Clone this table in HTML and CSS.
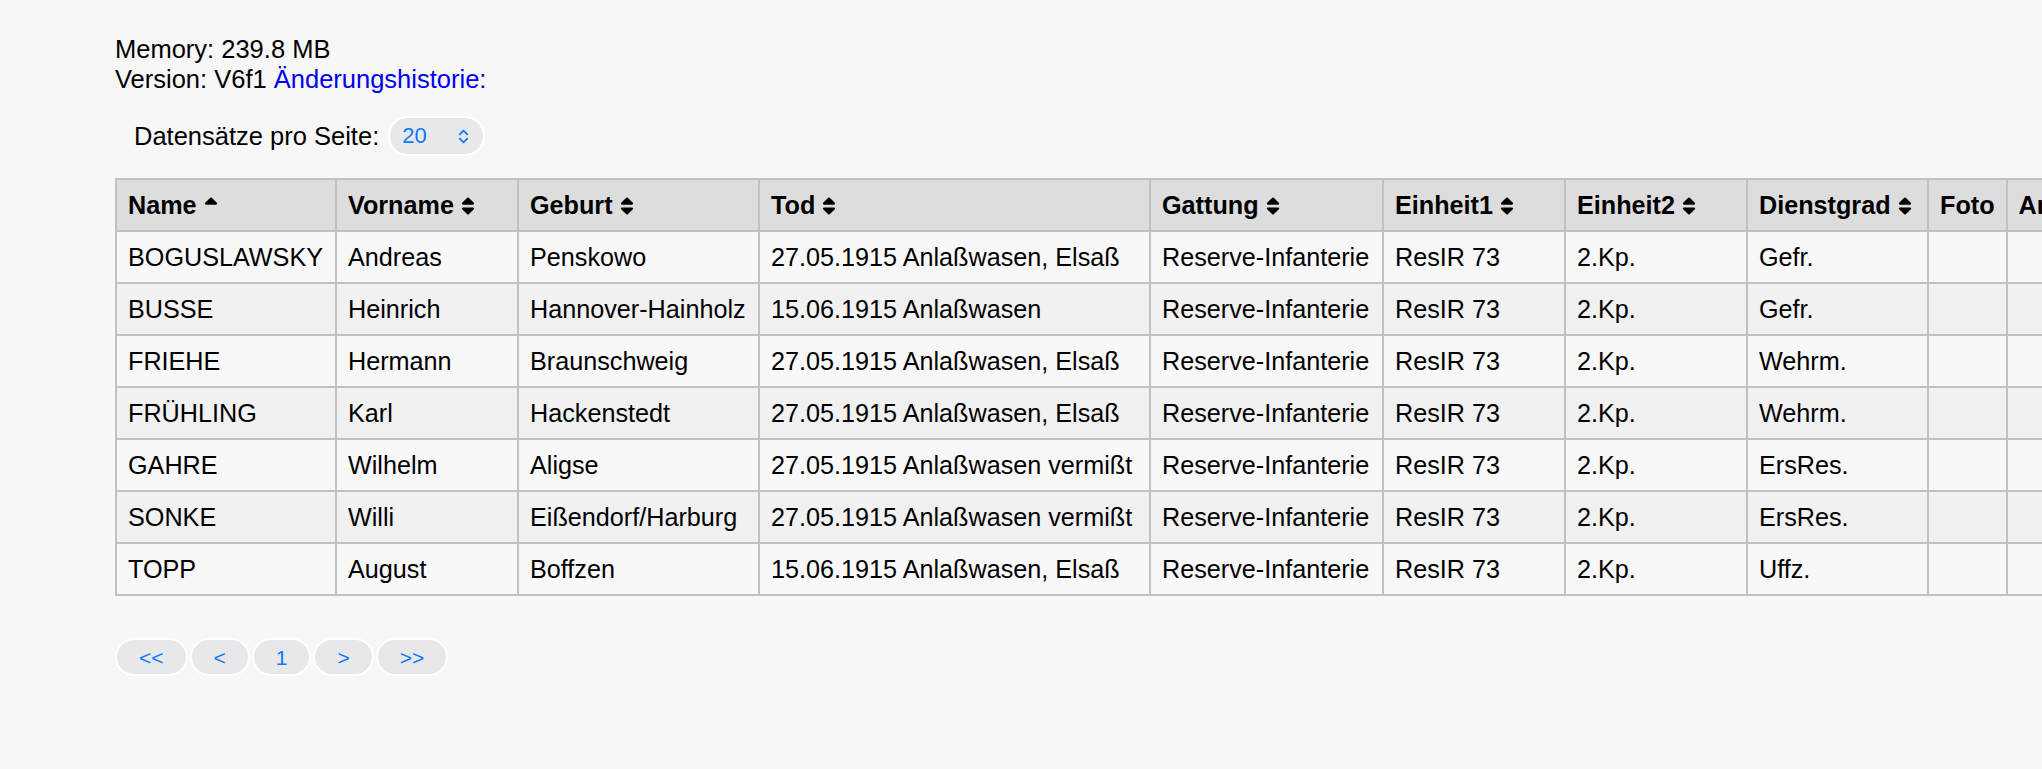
FILE: index.html
```html
<!DOCTYPE html>
<html lang="de">
<head>
<meta charset="utf-8">
<title>Datensätze</title>
<link rel="stylesheet" href="styles.css">
</head>
<body>
<div class="page">
  <div class="info">
    <div>Memory: 239.8 MB</div>
    <div>Version: V6f1 <a class="history" href="#">Änderungshistorie:</a></div>
  </div>

  <div class="pagesize">
    <span class="pagesize-label">Datensätze pro Seite:</span>
    <span class="select">
      <span class="select-value">20</span>
      <svg class="chevrons" viewBox="0 0 12 16" width="13" height="17"><path d="M2.5 6 L6 2.5 L9.5 6 M2.5 10 L6 13.5 L9.5 10" fill="none" stroke="#0a7aff" stroke-width="1.7" stroke-linecap="round" stroke-linejoin="round"/></svg>
    </span>
  </div>

  <table class="grid">
    <thead>
      <tr>
        <th class="c-name">Name <svg class="sort" viewBox="0 0 320 512"><path d="M296 183L177 64c-9.4-9.4-24.6-9.4-33.9 0L24 183c-15.1 15.1-4.4 41 17 41h238c21.4 0 32.1-25.9 17-41z"/></svg></th>
        <th class="c-vorname">Vorname <svg class="sort" viewBox="0 0 320 512"><path d="M296 183L177 64c-9.4-9.4-24.6-9.4-33.9 0L24 183c-15.1 15.1-4.4 41 17 41h238c21.4 0 32.1-25.9 17-41zM41 288h238c21.4 0 32.1 25.9 17 41L177 448c-9.4 9.4-24.6 9.4-33.9 0L24 329c-15.1-15.1-4.4-41 17-41z"/></svg></th>
        <th class="c-geburt">Geburt <svg class="sort" viewBox="0 0 320 512"><path d="M296 183L177 64c-9.4-9.4-24.6-9.4-33.9 0L24 183c-15.1 15.1-4.4 41 17 41h238c21.4 0 32.1-25.9 17-41zM41 288h238c21.4 0 32.1 25.9 17 41L177 448c-9.4 9.4-24.6 9.4-33.9 0L24 329c-15.1-15.1-4.4-41 17-41z"/></svg></th>
        <th class="c-tod">Tod <svg class="sort" viewBox="0 0 320 512"><path d="M296 183L177 64c-9.4-9.4-24.6-9.4-33.9 0L24 183c-15.1 15.1-4.4 41 17 41h238c21.4 0 32.1-25.9 17-41zM41 288h238c21.4 0 32.1 25.9 17 41L177 448c-9.4 9.4-24.6 9.4-33.9 0L24 329c-15.1-15.1-4.4-41 17-41z"/></svg></th>
        <th class="c-gattung">Gattung <svg class="sort" viewBox="0 0 320 512"><path d="M296 183L177 64c-9.4-9.4-24.6-9.4-33.9 0L24 183c-15.1 15.1-4.4 41 17 41h238c21.4 0 32.1-25.9 17-41zM41 288h238c21.4 0 32.1 25.9 17 41L177 448c-9.4 9.4-24.6 9.4-33.9 0L24 329c-15.1-15.1-4.4-41 17-41z"/></svg></th>
        <th class="c-unit">Einheit1 <svg class="sort" viewBox="0 0 320 512"><path d="M296 183L177 64c-9.4-9.4-24.6-9.4-33.9 0L24 183c-15.1 15.1-4.4 41 17 41h238c21.4 0 32.1-25.9 17-41zM41 288h238c21.4 0 32.1 25.9 17 41L177 448c-9.4 9.4-24.6 9.4-33.9 0L24 329c-15.1-15.1-4.4-41 17-41z"/></svg></th>
        <th class="c-unit">Einheit2 <svg class="sort" viewBox="0 0 320 512"><path d="M296 183L177 64c-9.4-9.4-24.6-9.4-33.9 0L24 183c-15.1 15.1-4.4 41 17 41h238c21.4 0 32.1-25.9 17-41zM41 288h238c21.4 0 32.1 25.9 17 41L177 448c-9.4 9.4-24.6 9.4-33.9 0L24 329c-15.1-15.1-4.4-41 17-41z"/></svg></th>
        <th class="c-rank">Dienstgrad <svg class="sort" viewBox="0 0 320 512"><path d="M296 183L177 64c-9.4-9.4-24.6-9.4-33.9 0L24 183c-15.1 15.1-4.4 41 17 41h238c21.4 0 32.1-25.9 17-41zM41 288h238c21.4 0 32.1 25.9 17 41L177 448c-9.4 9.4-24.6 9.4-33.9 0L24 329c-15.1-15.1-4.4-41 17-41z"/></svg></th>
        <th class="c-foto">Foto</th>
        <th class="c-note">Anmerkung</th>
      </tr>
    </thead>
    <tbody>
      <tr><td>BOGUSLAWSKY</td><td>Andreas</td><td>Penskowo</td><td>27.05.1915 Anlaßwasen, Elsaß</td><td>Reserve-Infanterie</td><td>ResIR 73</td><td>2.Kp.</td><td>Gefr.</td><td></td><td></td></tr>
      <tr><td>BUSSE</td><td>Heinrich</td><td>Hannover-Hainholz</td><td>15.06.1915 Anlaßwasen</td><td>Reserve-Infanterie</td><td>ResIR 73</td><td>2.Kp.</td><td>Gefr.</td><td></td><td></td></tr>
      <tr><td>FRIEHE</td><td>Hermann</td><td>Braunschweig</td><td>27.05.1915 Anlaßwasen, Elsaß</td><td>Reserve-Infanterie</td><td>ResIR 73</td><td>2.Kp.</td><td>Wehrm.</td><td></td><td></td></tr>
      <tr><td>FRÜHLING</td><td>Karl</td><td>Hackenstedt</td><td>27.05.1915 Anlaßwasen, Elsaß</td><td>Reserve-Infanterie</td><td>ResIR 73</td><td>2.Kp.</td><td>Wehrm.</td><td></td><td></td></tr>
      <tr><td>GAHRE</td><td>Wilhelm</td><td>Aligse</td><td>27.05.1915 Anlaßwasen vermißt</td><td>Reserve-Infanterie</td><td>ResIR 73</td><td>2.Kp.</td><td>ErsRes.</td><td></td><td></td></tr>
      <tr><td>SONKE</td><td>Willi</td><td>Eißendorf/Harburg</td><td>27.05.1915 Anlaßwasen vermißt</td><td>Reserve-Infanterie</td><td>ResIR 73</td><td>2.Kp.</td><td>ErsRes.</td><td></td><td></td></tr>
      <tr><td>TOPP</td><td>August</td><td>Boffzen</td><td>15.06.1915 Anlaßwasen, Elsaß</td><td>Reserve-Infanterie</td><td>ResIR 73</td><td>2.Kp.</td><td>Uffz.</td><td></td><td></td></tr>
    </tbody>
  </table>

  <nav class="pager">
    <button class="pager-btn">&lt;&lt;</button>
    <button class="pager-btn">&lt;</button>
    <button class="pager-btn">1</button>
    <button class="pager-btn">&gt;</button>
    <button class="pager-btn">&gt;&gt;</button>
  </nav>
</div>
</body>
</html>
```

FILE: styles.css
```css
html, body {
  margin: 0;
  padding: 0;
  background: #f7f7f7;
  overflow: hidden;
}

body {
  font-family: "Liberation Sans", Arial, Helvetica, sans-serif;
  font-size: 25.5px;
  color: #000;
}

.page {
  padding: 34px 0 0 115px;
  width: max-content;
}

.info {
  line-height: 30px;
}

.history {
  color: #0000ee;
  text-decoration: none;
}

.pagesize {
  display: flex;
  align-items: center;
  gap: 9px;
  margin-top: 22px;
  padding-left: 19px;
  height: 40px;
}

.select {
  display: flex;
  align-items: center;
  justify-content: space-between;
  box-sizing: border-box;
  width: 97px;
  height: 40px;
  padding: 0 13px 0 12px;
  border: 2px solid #ffffff;
  border-radius: 20px;
  background: #e8e8eb;
  color: #0a7aff;
  font-size: 22px;
}

.grid {
  margin-top: 22px;
  border-collapse: collapse;
  border: 2px solid #c1c1c1;
  font-size: 25.2px;
}

.grid th,
.grid td {
  box-sizing: border-box;
  border: 2px solid #c1c1c1;
  padding: 11px 11px;
  line-height: 28px;
  text-align: left;
  white-space: nowrap;
  vertical-align: middle;
}

.grid th {
  background: #dddddd;
  font-weight: bold;
}

.c-name { width: 220px; }
.c-vorname { width: 182px; }
.c-geburt { width: 241px; }
.c-tod { width: 391px; }
.c-gattung { width: 233px; }
.c-unit { width: 182px; }
.c-rank { width: 181px; }
.c-foto { width: 78px; }
.c-note { width: 200px; }

.grid tbody tr:nth-child(odd) td {
  background: #f8f8f8;
}

.grid tbody tr:nth-child(even) td {
  background: #f1f1f1;
}

.sort {
  width: 14px;
  height: 22px;
  vertical-align: -3px;
  fill: #000;
}

.pager {
  display: flex;
  gap: 2px;
  margin-top: 42px;
}

.pager-btn {
  box-sizing: border-box;
  height: 38px;
  padding: 0 22px;
  border: 2px solid #ffffff;
  border-radius: 19px;
  background: #e8e8eb;
  color: #0a7aff;
  font-family: "Liberation Sans", Arial, sans-serif;
  font-size: 21px;
  line-height: 1;
}
```
